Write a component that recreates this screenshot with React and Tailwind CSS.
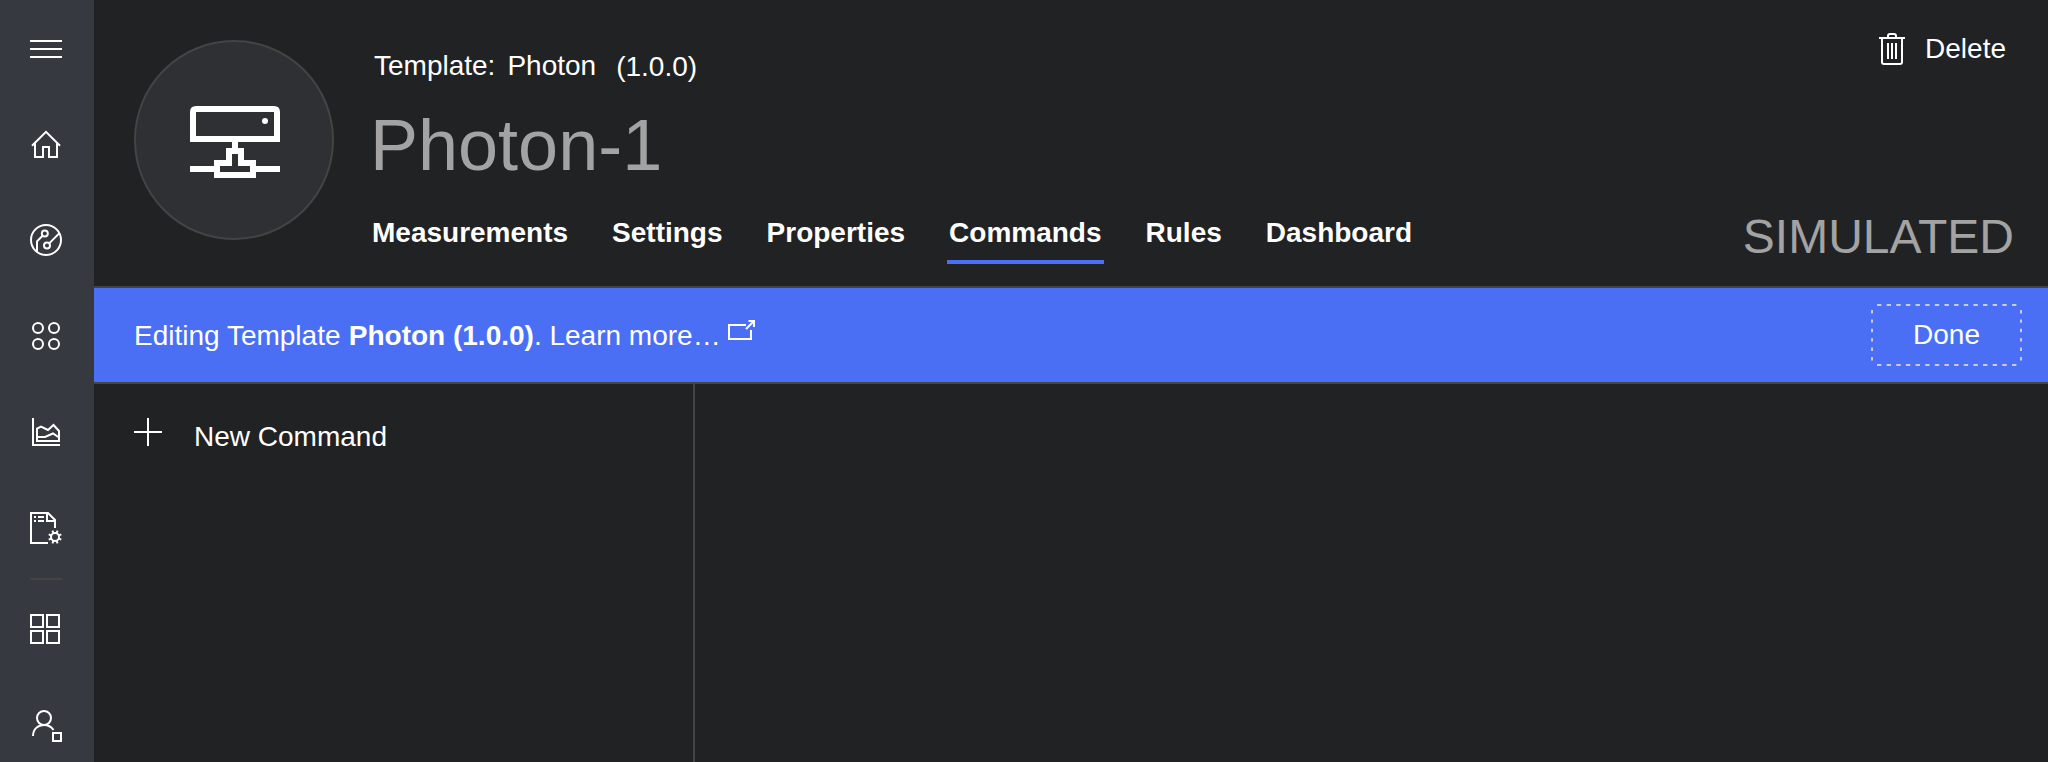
function Icon({ w = 32, h = 32, sw = 2, children, className = '' }) {
  return (
    <svg
      width={w}
      height={h}
      viewBox={`0 0 ${w} ${h}`}
      fill="none"
      stroke="currentColor"
      strokeWidth={sw}
      className={`block shrink-0 ${className}`}
    >
      {children}
    </svg>
  );
}

const GEAR_ANGLES = [0, 45, 90, 135, 180, 225, 270, 315];

const Menu = () => (
  <Icon>
    <path d="M0 8H32M0 16H32M0 24H32" />
  </Icon>
);

const Home = () => (
  <Icon>
    <path d="M2 16.8 16 2.8 30 16.8M5 14V28H13V18H19V28H27V14" />
  </Icon>
);

const Explorer = () => (
  <Icon className="-mt-px">
    <circle cx="16" cy="16" r="15" />
    <circle cx="14.8" cy="9.6" r="3" />
    <circle cx="17" cy="21.6" r="3" />
    <path d="M12.6 11.8 7 17.4V27.5M19.2 19.4 29.2 9.4" />
  </Icon>
);

const DeviceSets = () => (
  <Icon>
    <circle cx="8" cy="8" r="5" />
    <circle cx="24" cy="8" r="5" />
    <circle cx="8" cy="24" r="5" />
    <circle cx="24" cy="24" r="5" />
  </Icon>
);

const Analytics = () => (
  <Icon>
    <path d="M3 2V29H30" />
    <path d="M7 25V12.5L11 10.5 18 14 23.5 9 29 15V25ZM7 21H15L23 17.5 29 21.5" />
  </Icon>
);

const Jobs = () => (
  <Icon>
    <path d="M18 31H1V1H18L25 8V16M17 1V9H25" />
    <path d="M4 5H6M8 5H14M4 9H6M8 9H14" />
    <circle cx="25" cy="25" r="4" />
    {GEAR_ANGLES.map((a) => (
      <path key={a} d="M25 20.8V18.2" transform={`rotate(${a + 22.5} 25 25)`} />
    ))}
  </Icon>
);

const Apps = () => (
  <Icon>
    <path d="M1 2H13V14H1ZM17 2H29V14H17ZM1 18H13V30H1ZM17 18H29V30H17Z" />
  </Icon>
);

const Admin = () => (
  <Icon>
    <circle cx="14" cy="8" r="7" />
    <path d="M3 26C3 19 8 15 14 15 18 15 21.5 17 23.5 20M23 23H31V31H23Z" />
  </Icon>
);

const NAV = [Menu, Home, Explorer, DeviceSets, Analytics, Jobs];

const Device = () => (
  <Icon w={90} h={72} sw={6}>
    <path d="M3 33V6Q3 3 6 3H84Q87 3 87 6V33Z" />
    <circle cx="75" cy="15" r="3" fill="currentColor" stroke="none" />
    <path d="M45 36V42M0 63H27M63 63H90M27 57H39V45H51V57H63V69H27Z" />
  </Icon>
);

const Trash = () => (
  <Icon w={26}>
    <path d="M0 5H26M9 5V3Q9 1 11 1H15Q17 1 17 3V5M3 5V29Q3 31 5 31H21Q23 31 23 29V5M9 10V26M13 10V26M17 10V26" />
  </Icon>
);

const DashedOutline = () => (
  <Icon w={151} h={62} className="absolute inset-0 text-[#cbcbcd]">
    <path d="M6 1H146M6 61H146" strokeDasharray="4.4 5.24" />
    <path d="M1 6V57M150 6V57" strokeDasharray="3.4 6" />
  </Icon>
);

const TABS = ['Measurements', 'Settings', 'Properties', 'Commands', 'Rules', 'Dashboard'];

export default function App() {
  return (
    <div className="flex h-[762px] w-[2048px] overflow-hidden bg-[#212224] font-['Liberation_Sans',Arial,sans-serif] text-[28px] leading-8 text-white">
      <nav className="flex w-[94px] shrink-0 flex-col bg-[#373941] pl-[30px] pt-[33px]">
        <div className="flex flex-col gap-16">
          {NAV.map((Glyph, i) => (
            <Glyph key={i} />
          ))}
        </div>
        <div className="mt-[34px] h-[2px] w-8 shrink-0 bg-[#444445]" />
        <div className="mt-[33px] flex flex-col gap-[65px]">
          <Apps />
          <Admin />
        </div>
      </nav>

      <div className="flex min-w-0 grow flex-col">
        <header className="flex h-[288px] shrink-0 border-b-2 border-[#444445] pl-10">
          <div className="mt-10 flex h-[200px] w-[200px] shrink-0 items-center justify-center rounded-full border-2 border-[#444445] bg-[#2f3034] pl-[2px] pt-1">
            <Device />
          </div>
          <div className="flex grow flex-col pl-9 pt-[50px]">
            <div className="flex pl-1">
              <span>Template:</span>
              <span className="ml-[12px]">Photon</span>
              <span className="ml-[20px] mt-px">(1.0.0)</span>
            </div>
            <h1 className="mt-[22px] text-[72px] leading-[80px] text-[#a3a3a3]">Photon-1</h1>
            <div className="mt-[32px] flex gap-[40px]">
              {TABS.map((tab) => (
                <a
                  key={tab}
                  className={`border-b-4 px-[2px] pb-[11px] font-bold ${tab === 'Commands' ? 'border-[#4a6ff5]' : 'border-transparent'}`}
                >
                  {tab}
                </a>
              ))}
            </div>
          </div>
          <div className="flex flex-col items-end pt-[33px]">
            <button className="mr-[42px] flex gap-[20px]">
              <Trash />
              <span>Delete</span>
            </button>
            <div className="mr-[34px] mt-[144px] text-[48px] leading-[56px] text-[#a3a3a3]">SIMULATED</div>
          </div>
        </header>

        <div className="flex h-[96px] shrink-0 items-center justify-between border-b-2 border-[#444445] bg-[#4a6ff5] pl-10 pr-[26px]">
          <div className="mt-[2px] flex">
            <span>
              Editing Template <b className="ml-[0.5px]">Photon (1.0.0)</b>. Learn more…
            </span>
            <Icon w={28} h={20} className="ml-[7.5px]">
              <path d="M18 5H1V19H23V10M18 9 26 1M20.5 1H26V7" />
            </Icon>
          </div>
          <button className="relative flex h-[62px] w-[151px] items-center justify-center">
            <DashedOutline />
            Done
          </button>
        </div>

        <div className="flex grow">
          <aside className="w-[601px] shrink-0 border-r-2 border-[#444445] pl-10 pt-[34px]">
            <button className="flex gap-[32px]">
              <Icon w={28} h={28}>
                <path d="M0 14H28M14 0V28" />
              </Icon>
              <span className="mt-[3px]">New Command</span>
            </button>
          </aside>
          <main className="grow" />
        </div>
      </div>
    </div>
  );
}
